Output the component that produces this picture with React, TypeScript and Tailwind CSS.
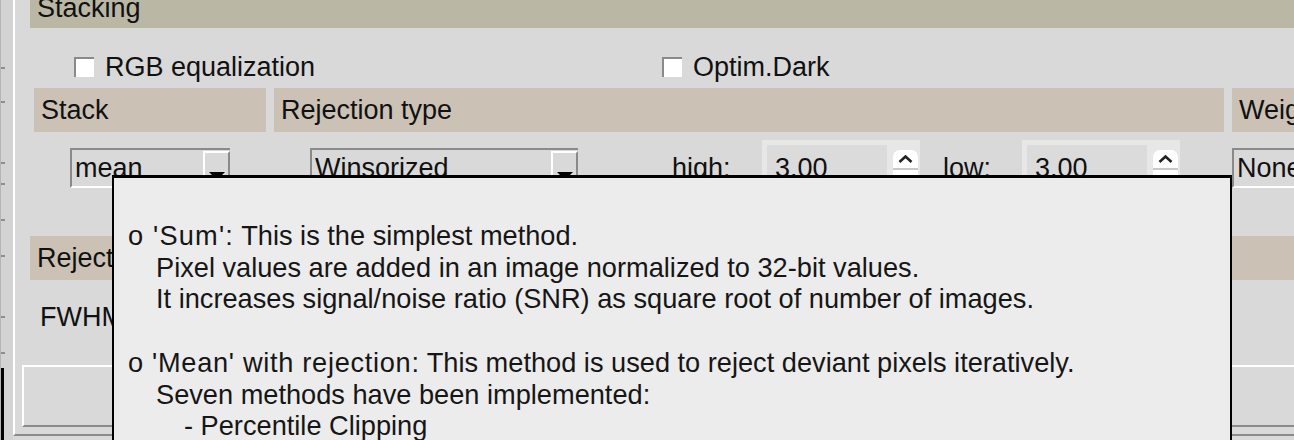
const ticks = ["h-[67px]", "h-[32px]", "h-[59px]", "h-[19px]", "h-[34px]", "h-[34px]", "h-[59px]", "h-[34px]"];

function Checkbox({ label }: { label: string }) {
  return (
    <div className="flex items-center">
      <div className="w-[20px] h-[20px] bg-white border-t-2 border-l-2 border-[#8a8a8a]" />
      <span className="ml-[11px] leading-none">{label}</span>
    </div>
  );
}

function Combo({ value, className }: { value: string; className: string }) {
  return (
    <div
      className={`flex h-[40px] border-t-2 border-l-2 border-[#8a8a8a] border-b-2 border-b-white ${className}`}
    >
      <span className="flex-1 pl-[3px] leading-none flex items-center overflow-hidden whitespace-nowrap">{value}</span>
      <div className="w-[27px] mt-[1px] shrink-0 border-t-2 border-l-2 border-white border-r-2 border-r-[#8a8a8a] border-b-2 border-b-[#8a8a8a] flex justify-center pt-[19px]">
        <div className="w-0 h-0 border-l-[8px] border-r-[8px] border-t-[8px] border-l-transparent border-r-transparent border-t-black" />
      </div>
    </div>
  );
}

function SpinBox({ value }: { value: string }) {
  return (
    <div className="w-[158px] h-[56px] -mt-[8px] bg-[#e7e7e7] flex pl-[5px] pt-[5px] pr-[2px]">
      <div className="w-[120px] h-[46px] bg-[#dbdbdb] pl-[8px] flex items-center leading-none pt-[1px]">{value}</div>
      <div className="ml-[6px] flex flex-col w-[25px] pt-[5px]">
        <div className="h-[18px] bg-white rounded-t-[7px] flex items-center justify-center">
          <svg width="15" height="8" viewBox="0 0 15 8">
            <polyline points="1.5,7 7.5,1.5 13.5,7" fill="none" stroke="#222" strokeWidth="2.6" />
          </svg>
        </div>
        <div className="h-[2px] bg-[#c8c8c8]" />
        <div className="h-[18px] bg-white rounded-b-[7px] flex items-center justify-center">
          <svg width="15" height="8" viewBox="0 0 15 8">
            <polyline points="1.5,1 7.5,6.5 13.5,1" fill="none" stroke="#222" strokeWidth="2.6" />
          </svg>
        </div>
      </div>
    </div>
  );
}

export default function App() {
  return (
    <div className="relative w-[1294px] h-[440px] overflow-hidden bg-[#d9d9d9] flex text-[27px] text-[#111] font-['Liberation_Sans',Arial,sans-serif]">
      {/* left edge strip */}
      <div className="w-[13px] shrink-0 bg-[#d3d3d3] flex flex-col border-l border-[#b5b5b5]">
        {ticks.map((h, i) => (
          <div key={i}>
            <div className={h} />
            <div className="w-[4px] h-[2px] bg-[#8e8e8e]" />
          </div>
        ))}
        <div className="h-[14px]" />
        <div className="flex-1 w-[3px] bg-black" />
      </div>

      {/* Stacking frame */}
      <div className="flex-1 h-[436px] flex flex-col border-l-2 border-white border-b-2 border-b-[#8a8a8a]">
        <div className="ml-[15px] h-[28px] shrink-0 bg-[#bab8a4] overflow-hidden pl-[7px]">
          <div className="leading-[30px] -mt-[7px]">Stacking</div>
        </div>

        <div className="mt-[29px] h-[20px] flex items-center pl-[59px]">
          <div className="w-[588px]">
            <Checkbox label="RGB equalization" />
          </div>
          <Checkbox label="Optim.Dark" />
        </div>

        <div className="mt-[11px] h-[44px] shrink-0 flex gap-[8px] pl-[19px]">
          <div className="w-[232px] bg-[#cbc1b4] pl-[7px] flex items-center leading-none">Stack</div>
          <div className="w-[950px] bg-[#cbc1b4] pl-[7px] flex items-center leading-none">Rejection type</div>
          <div className="flex-1 bg-[#cbc1b4] pl-[7px] flex items-center leading-none overflow-hidden whitespace-nowrap">Weighting</div>
        </div>

        <div className="mt-[16px] h-[40px] shrink-0 flex gap-[8px] pl-[19px]">
          <div className="w-[232px] pl-[36px]">
            <Combo value="mean" className="w-[160px]" />
          </div>
          <div className="w-[950px] flex items-start">
            <Combo value="Winsorized" className="ml-[36px] w-[268px]" />
            <span className="ml-[94px] w-[90px] h-[40px] flex items-center leading-none">high:</span>
            <SpinBox value="3.00" />
            <span className="ml-[23px] w-[79px] h-[40px] flex items-center leading-none">low:</span>
            <SpinBox value="3.00" />
          </div>
          <div className="flex-1 overflow-hidden">
            <Combo value="None" className="w-[200px]" />
          </div>
        </div>

        <div className="mt-[48px] ml-[15px] h-[44px] shrink-0 bg-[#cbc1b4] pl-[7px] flex items-center leading-none">
          Rejection
        </div>

        <div className="mt-[18px] h-[39px] shrink-0 flex items-center justify-between">
          <span className="pl-[25px] leading-none">FWHM</span>
          <div className="w-[60px] h-[39px] bg-white border-t-2 border-l-2 border-[#9a9a9a]" />
        </div>

        <div className="mt-[28px] ml-[7px] h-[62px] shrink-0 border-t-2 border-l-2 border-white border-b-2 border-b-[#8a8a8a]" />
      </div>

      {/* tooltip */}
      <div className="absolute left-[112px] top-[175px] w-[1120px] h-[300px] bg-[#ececec] border-2 border-t-[3px] border-black pl-[14px] pt-[42px] text-[27.2px] leading-[31.7px] text-[#161616] whitespace-nowrap">
        <div>
          <span className="tracking-[1.2px]">o 'Sum':</span> This is the simplest method.
        </div>
        <div className="pl-[28px]">Pixel values are added in an image normalized to 32-bit values.</div>
        <div className="pl-[28px]">It increases signal/noise ratio (SNR) as square root of number of images.</div>
        <div className="h-[31.7px]" />
        <div>
          <span className="tracking-[0.7px]">o 'Mean' with rejection:</span> This method is used to reject deviant pixels iteratively.
        </div>
        <div className="pl-[28px]">Seven methods have been implemented:</div>
        <div className="pl-[56px]">- Percentile Clipping</div>
        <div className="pl-[56px]">- Sigma Clipping</div>
      </div>
    </div>
  );
}
